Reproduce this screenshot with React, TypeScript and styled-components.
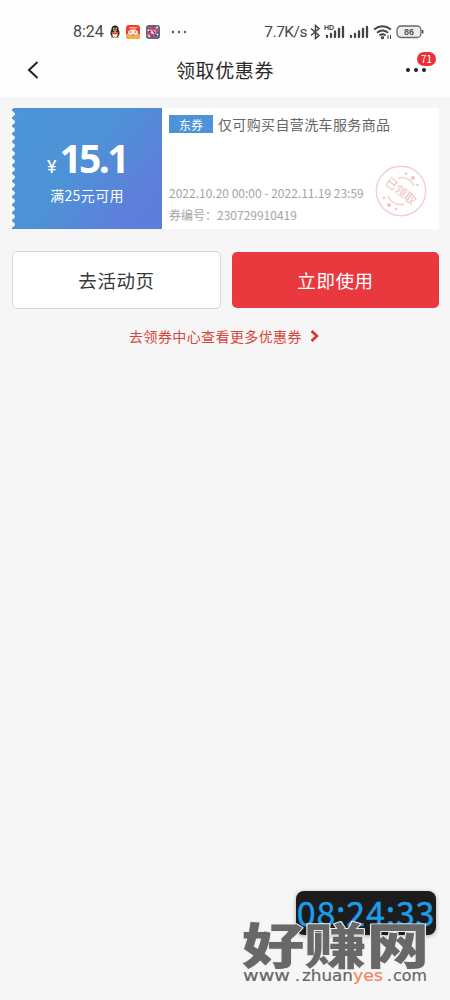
import React from "react";
import styled, { createGlobalStyle } from "styled-components";

const Global = createGlobalStyle`
  * { box-sizing: border-box; }
  body { margin: 0; background: #f6f6f6; font-family: "Noto Sans CJK SC", sans-serif; }
  button { font: inherit; padding: 0; margin: 0; border: 0; background: none; }
`;
const Page = styled.main`
  position: relative;
  width: 450px;
  height: 1000px;
  overflow: hidden;
  background: #f6f6f6;
`;
const Top = styled.header`
  height: 97px;
  background: #fefefe;
`;
const StatusBar = styled.div`
  height: 44px;
  padding: 17px 26px 0 73px;
  display: flex;
  justify-content: space-between;
  color: #484848;
`;
const StatusGroup = styled.div<{ $gap: number }>`
  display: flex;
  align-items: center;
  height: 29px;
  gap: ${(p) => p.$gap}px;
`;
const StatusText = styled.span<{ $size: number; $tracking?: number }>`
  font: ${(p) => p.$size}px/20px Roboto, sans-serif;
  letter-spacing: ${(p) => p.$tracking ?? 0}px;
  white-space: nowrap;
`;
const NavBar = styled.div`
  height: 52px;
  display: grid;
  grid-template-columns: 90px 1fr 90px;
  align-items: center;
`;
const BackButton = styled.button`
  display: flex;
  padding-left: 26px;
`;
const Title = styled.h1`
  margin: 0;
  text-align: center;
  font-size: 19px;
  line-height: 28px;
  font-weight: 400;
  letter-spacing: 0.6px;
  color: #2b2b2b;
`;
const MoreButton = styled.button`
  position: relative;
  height: 52px;
  display: flex;
  align-items: center;
  gap: 4px;
  padding-left: 46px;
`;
const Dot = styled.i`
  width: 4px;
  height: 4px;
  border-radius: 50%;
  background: #222;
`;
const Badge = styled.span`
  position: absolute;
  left: 57px;
  top: 8px;
  width: 19px;
  height: 14px;
  border-radius: 7px;
  background: #ee2f36;
  color: #fff;
  font-size: 10px;
  line-height: 14px;
  text-align: center;
`;
const Content = styled.section`
  padding: 11px 11px 0 12px;
`;
const Coupon = styled.article`
  display: flex;
  height: 121px;
  background: #fff;
`;
const Value = styled.div`
  width: 150px;
  padding-top: 28px;
  display: flex;
  flex-direction: column;
  align-items: center;
  color: #fff;
  background:
    radial-gradient(circle at 0 4px, #f6f6f6 2.5px, transparent 3px) 0 2px / 4px 7.9px repeat-y,
    linear-gradient(128deg, #4c95d6 0%, #4d92d6 45%, #5e7fdb 80%, #5b7fdb 100%);
`;
const Price = styled.div`
  display: flex;
  align-items: baseline;
  gap: 3px;
  height: 44px;
  line-height: 44px;
  font-family: "Open Sans", sans-serif;
  font-size: 39px;
  font-weight: 700;
  letter-spacing: -2.6px;
`;
const Yen = styled.span`
  font-family: Roboto, sans-serif;
  font-size: 18px;
  font-weight: 400;
  letter-spacing: 0;
`;
const Condition = styled.div`
  margin-top: 5px;
  font-size: 14px;
  line-height: 20px;
  letter-spacing: 0.4px;
`;
const Details = styled.div`
  position: relative;
  flex: 1;
  padding: 5px 0 0 7px;
`;
const Heading = styled.div`
  display: flex;
  align-items: center;
  gap: 5px;
  height: 21px;
  color: #666;
  font-size: 14px;
  letter-spacing: 0.37px;
  white-space: nowrap;
`;
const Tag = styled.span`
  width: 44px;
  height: 18px;
  background: #4c94d7;
  color: #fff;
  font-size: 12px;
  line-height: 19px;
  letter-spacing: 0;
  text-align: center;
`;
const Meta = styled.div`
  margin-top: 48px;
  color: #a4a4a4;
  font-size: 12px;
  line-height: 21.5px;
  white-space: nowrap;
`;
const Stamp = styled.svg`
  position: absolute;
  left: 213px;
  top: 57px;
`;
const Actions = styled.div`
  display: flex;
  align-items: center;
  gap: 11px;
  margin-top: 22px;
  height: 58px;
`;
const Action = styled.button<{ $primary?: boolean }>`
  width: ${(p) => (p.$primary ? 207 : 209)}px;
  height: ${(p) => (p.$primary ? 56 : 58)}px;
  border: ${(p) => (p.$primary ? "0" : "1px solid #d8d8d8")};
  border-radius: 5px;
  background: ${(p) => (p.$primary ? "#e9393f" : "#fff")};
  color: ${(p) => (p.$primary ? "#fff" : "#383838")};
  font-size: 18.5px;
  letter-spacing: 0.6px;
`;
const MoreLink = styled.a`
  display: flex;
  align-items: center;
  justify-content: center;
  gap: 8px;
  height: 20px;
  margin: 17px 3px 0 0;
  color: #d9453b;
  font-size: 14px;
  letter-spacing: 0.4px;
`;
const Clock = styled.time`
  position: absolute;
  left: 296px;
  top: 891px;
  width: 140px;
  height: 44px;
  border-radius: 8px;
  background: #1c1c1c;
  box-shadow: 0 1px 4px #0005;
  color: #1c9de9;
  font: 34px/41px "Noto Sans CJK SC", sans-serif;
  -webkit-text-stroke: 0.4px #1c9de9;
  letter-spacing: 0.8px;
  text-align: center;
  white-space: nowrap;
`;
const Watermark = styled.svg`
  position: absolute;
  left: 240px;
  top: 915px;
`;

function Signal({ hd }: { hd?: boolean }) {
  return (
    <svg width="21" height="15" viewBox="0 0 21 15">
      {hd && <text x="0" y="6" fontSize="7" fontWeight="700" fill="#444" fontFamily="Liberation Sans">HD</text>}
      <path d="M3 12v1M7 10v3M11 7.500v5.500M15 5v8M19 3v10" stroke="#444" strokeWidth="2.300" strokeLinecap="round" />
    </svg>
  );
}

const StatusIcons = () => (
  <>
    <svg width="10" height="14" viewBox="0 0 10 14">
      <ellipse cx="5" cy="8" rx="4.6" ry="4.8" fill="#222" />
      <circle cx="5" cy="4" r="3.5" fill="#222" />
      <ellipse cx="5" cy="9.5" rx="2.7" ry="3" fill="#eee" />
      <path d="M1.5 6.5q3.5 2 7 0v1.8q-3.5 1.8-7 0z" fill="#e53b32" />
      <circle cx="3.8" cy="3.3" r=".7" fill="#fff" /><circle cx="6.2" cy="3.3" r=".7" fill="#fff" />
      <path d="M3 5h4L5 6zM1 12.5h3.5M5.5 12.5H9" fill="#f5a623" stroke="#e2942d" />
    </svg>
    <svg width="14" height="14" viewBox="0 0 14 14">
      <rect width="14" height="14" rx="3" fill="#eb4037" />
      <path d="M0 9h14v2a3 3 0 0 1-3 3H3a3 3 0 0 1-3-3z" fill="#f3ac51" />
      <ellipse cx="7" cy="7.5" rx="5" ry="2.8" fill="#ffe9d9" />
      <path d="M3 2.5h8M4 4h6" stroke="#ffb78f" />
      <circle cx="4.5" cy="7" r=".8" fill="#c44a40" /><circle cx="9.500" cy="7" r=".8" fill="#c44a40" />
      <path d="M5 9.500h4l-2 1.500z" fill="#e2453a" />
    </svg>
    <svg width="14" height="14" viewBox="0 0 14 14">
      <rect width="14" height="14" rx="3" fill="#56668a" />
      <path d="M1 3l4-2 2 3 4-3 2 5-3 1 2 4-4 2-2-4-3 3-3-3 3-2z" fill="#db465c" />
      <path d="M4 4l2 2 3-1 1 3-3 1-2-1z" fill="#eef" />
      <path d="M2 10l2 2M10 3l2-1M1.500 5l2 1M10 11l2-2" stroke="#dce6f5" strokeWidth="1.500" />
      <path d="M7 6l2 2M3 6l2 1M9 10l2 1" stroke="#31405e" strokeWidth="1.3" />
    </svg>
  </>
);

function ReceivedStamp() {
  return (
    <Stamp width="52" height="52" viewBox="0 0 52 52">
      <g fill="none" stroke="#f3cfcf" strokeWidth="1.4">
        <circle cx="26" cy="26" r="24.7" />
        <path d="M23 13A13.500 13.500 0 0 1 39 21M29 39A13.500 13.500 0 0 1 13 31" />
      </g>
      <g fill="#f1c5c5">
        <circle cx="31" cy="8.500" r="1.3" /><circle cx="38" cy="13" r="2" /><circle cx="42.500" cy="20" r="1.2" />
        <circle cx="9" cy="33" r="1.2" /><circle cx="14" cy="40" r="2" /><circle cx="21" cy="44" r="1.3" />
      </g>
      <text x="26" y="30.500" transform="rotate(39 26 26)" textAnchor="middle" fontSize="12" fontWeight="500" fill="#f2c9c9">已领取</text>
    </Stamp>
  );
}

export default function App() {
  return (
    <Page>
      <Global />
      <Top>
        <StatusBar>
          <StatusGroup $gap={6}>
            <StatusText $size={16}>8:24</StatusText>
            <StatusIcons />
            <svg width="28" height="4" viewBox="0 0 28 4" fill="#555">
              <circle cx="7" cy="2" r="1.2" /><circle cx="13" cy="2" r="1.2" /><circle cx="19" cy="2" r="1.2" />
            </svg>
          </StatusGroup>
          <StatusGroup $gap={3}>
            <StatusText $size={15.5} $tracking={-0.5}>7.7K/s</StatusText>
            <svg width="11" height="16" viewBox="0 0 11 16" fill="none" stroke="#444" strokeWidth="1.5">
              <path d="M1 4.5l8 7-3.5 3V1.5L9 4.5l-8 7" />
            </svg>
            <Signal hd />
            <Signal />
            <svg width="21" height="16" viewBox="0 0 21 16" fill="none" stroke="#444" strokeWidth="1.9">
              <path d="M2 5.500Q10.500 -1 19 5.500M5 8.700q5.500-4.500 11 0M7.500 11.400q3-2.300 6 0" />
              <circle cx="10.500" cy="13.700" r=".7" /><path d="M16 11v4M18.500 11v4" strokeWidth="1" />
            </svg>
            <svg width="28" height="14" viewBox="0 0 28 14">
              <rect x="1" y="1" width="24" height="11.500" rx="4" fill="#eee" stroke="#666" strokeWidth="1.300" />
              <path d="M26.700 5v3.500" stroke="#555" strokeWidth="1.500" />
              <text x="13" y="10" fontSize="9" fontWeight="700" textAnchor="middle" fill="#555" fontFamily="Liberation Sans">86</text>
            </svg>
          </StatusGroup>
        </StatusBar>
        <NavBar>
          <BackButton aria-label="返回">
            <svg width="14" height="20" viewBox="0 0 14 20" fill="none" stroke="#222" strokeWidth="2">
              <path d="M11.500 2L3 10l8.500 8" />
            </svg>
          </BackButton>
          <Title>领取优惠券</Title>
          <MoreButton aria-label="更多">
            <Dot /><Dot /><Dot />
            <Badge>71</Badge>
          </MoreButton>
        </NavBar>
      </Top>
      <Content>
        <Coupon>
          <Value>
            <Price><Yen>¥</Yen>15.1</Price>
            <Condition>满25元可用</Condition>
          </Value>
          <Details>
            <Heading><Tag>东券</Tag>仅可购买自营洗车服务商品</Heading>
            <Meta>
              <div>2022.10.20 00:00 - 2022.11.19 23:59</div>
              <div>券编号：230729910419</div>
            </Meta>
            <ReceivedStamp />
          </Details>
        </Coupon>
        <Actions>
          <Action>去活动页</Action>
          <Action $primary>立即使用</Action>
        </Actions>
        <MoreLink>
          去领券中心查看更多优惠券
          <svg width="9" height="12" viewBox="0 0 9 12" fill="none" stroke="#dc2f24" strokeWidth="2.500">
            <path d="M1.500 1L7 6l-5.500 5" />
          </svg>
        </MoreLink>
      </Content>
      <Clock>08:24:33</Clock>
      <Watermark width="200" height="75" viewBox="0 0 200 75">
        <text x="2" y="48.500" textLength="187" lengthAdjust="spacingAndGlyphs" fontFamily="Noto Sans CJK SC" fontWeight="900"
          fontSize="49" fill="#686868" stroke="#eee" strokeWidth="1.800" strokeLinejoin="round" paintOrder="stroke">好赚网</text>
        <g fontFamily="DejaVu Sans" fontSize="15" fill="#666" stroke="#666" strokeWidth=".2">
          <text x="3" y="65.500" textLength="47" lengthAdjust="spacingAndGlyphs">www</text>
          <text x="55" y="65.500">.</text>
          <text x="62" y="65.500" textLength="51" lengthAdjust="spacingAndGlyphs">zhuan</text>
          <text x="113" y="65.500" textLength="30" lengthAdjust="spacingAndGlyphs" fill="#f48468" stroke="#f48468">yes</text>
          <text x="147" y="65.500">.</text>
          <text x="153" y="65.500" textLength="34" lengthAdjust="spacingAndGlyphs">com</text>
        </g>
      </Watermark>
    </Page>
  );
}
